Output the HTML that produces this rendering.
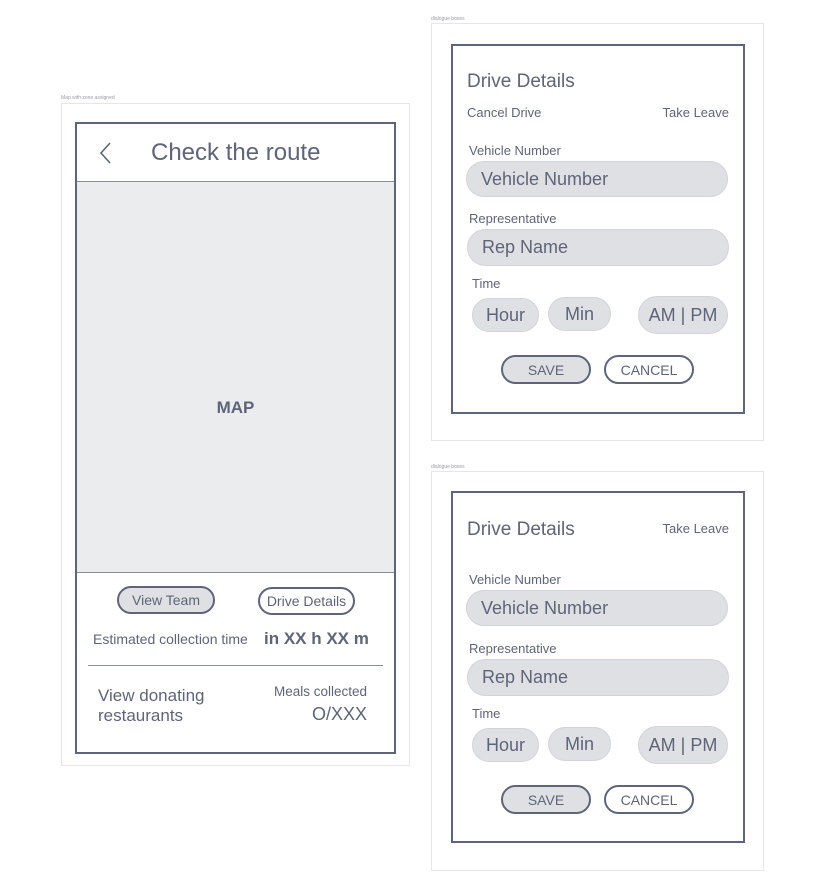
<!DOCTYPE html>
<html><head><meta charset="utf-8"><style>
*{margin:0;padding:0;box-sizing:border-box}
body{width:825px;height:892px;background:#fff;position:relative;overflow:hidden;font-family:"Liberation Sans",sans-serif;color:#5f6478}
div{position:absolute}
.card{border:1px solid #e6e6e8;background:#fff}
.frame{border:2px solid #5f6478;background:#fff}
.lbl{font-size:5px;color:#9a9ca4;white-space:nowrap}
.t{white-space:nowrap;line-height:1}
.pill{border-radius:20px;background:#dfe0e4;border:1.5px solid #d2d4d9;display:flex;align-items:center;justify-content:center;font-size:18px;color:#5f6478}
.in{justify-content:flex-start;padding-left:14px}
.btn{border-radius:16px;border:2px solid #5f6478;display:flex;align-items:center;justify-content:center;font-size:14px;color:#5f6478}
</style></head><body>

<!-- left -->
<div class="lbl" style="left:61px;top:95px">Map with zone assigned</div>
<div class="card" style="left:61px;top:103px;width:349px;height:663px"></div>
<div class="frame" style="left:75px;top:122px;width:321px;height:632px"></div>
<svg style="position:absolute;left:98px;top:141px" width="16" height="24"><path d="M12 2 L3 12 L12 22" fill="none" stroke="#5f6478" stroke-width="1.6"/></svg>
<div class="t" style="left:151px;top:141px;font-size:24px">Check the route</div>
<div style="left:77px;top:181px;width:317px;height:392px;background:#ebecee;border-top:1.5px solid #8a8e9c;border-bottom:1.5px solid #8a8e9c"></div>
<div class="t" style="left:77px;top:399px;width:317px;text-align:center;font-size:17px;font-weight:bold">MAP</div>
<div class="btn" style="left:117px;top:586px;width:98px;height:28px;background:#dfe0e4;font-size:14px">View Team</div>
<div class="btn" style="left:258px;top:587px;width:97px;height:28px;font-size:14px">Drive Details</div>
<div class="t" style="left:93px;top:632px;font-size:14px">Estimated collection time</div>
<div class="t" style="left:264px;top:630px;font-size:17px;font-weight:bold">in XX h XX m</div>
<div style="left:88px;top:665px;width:295px;height:1px;background:#8a8e9c"></div>
<div class="t" style="left:98px;top:686px;font-size:17px;line-height:20px">View donating<br>restaurants</div>
<div class="t" style="left:200px;top:685px;width:167px;text-align:right;font-size:13.5px">Meals collected</div>
<div class="t" style="left:200px;top:705px;width:167px;text-align:right;font-size:18px">O/XXX</div>

<!-- top right -->
<div class="lbl" style="left:431px;top:16px">dialogue boxes</div>
<div class="card" style="left:431px;top:23px;width:333px;height:418px"></div>
<div class="frame" style="left:451px;top:44px;width:294px;height:370px"></div>
<div class="t" style="left:467px;top:72px;font-size:19px">Drive Details</div>
<div class="t" style="left:467px;top:106px;font-size:13px">Cancel Drive</div>
<div class="t" style="left:600px;top:106px;width:129px;text-align:right;font-size:13px">Take Leave</div>
<div class="t" style="left:469px;top:144px;font-size:13px">Vehicle Number</div>
<div class="pill in" style="left:466px;top:161px;width:262px;height:36px">Vehicle Number</div>
<div class="t" style="left:469px;top:212px;font-size:13px">Representative</div>
<div class="pill in" style="left:467px;top:229px;width:262px;height:37px">Rep Name</div>
<div class="t" style="left:472px;top:277px;font-size:13px">Time</div>
<div class="pill" style="left:472px;top:298px;width:67px;height:34px">Hour</div>
<div class="pill" style="left:548px;top:297px;width:63px;height:34px">Min</div>
<div class="pill" style="left:638px;top:296px;width:90px;height:38px">AM | PM</div>
<div class="btn" style="left:501px;top:355px;width:90px;height:29px;background:#dfe0e4">SAVE</div>
<div class="btn" style="left:604px;top:355px;width:90px;height:29px">CANCEL</div>

<!-- bottom right -->
<div class="lbl" style="left:431px;top:464px">dialogue boxes</div>
<div class="card" style="left:431px;top:471px;width:333px;height:400px"></div>
<div class="frame" style="left:451px;top:491px;width:294px;height:352px"></div>
<div class="t" style="left:467px;top:520px;font-size:19px">Drive Details</div>
<div class="t" style="left:600px;top:522px;width:129px;text-align:right;font-size:13px">Take Leave</div>
<div class="t" style="left:469px;top:573px;font-size:13px">Vehicle Number</div>
<div class="pill in" style="left:466px;top:590px;width:262px;height:36px">Vehicle Number</div>
<div class="t" style="left:469px;top:642px;font-size:13px">Representative</div>
<div class="pill in" style="left:467px;top:659px;width:262px;height:37px">Rep Name</div>
<div class="t" style="left:472px;top:707px;font-size:13px">Time</div>
<div class="pill" style="left:472px;top:728px;width:67px;height:34px">Hour</div>
<div class="pill" style="left:548px;top:727px;width:63px;height:34px">Min</div>
<div class="pill" style="left:638px;top:726px;width:90px;height:38px">AM | PM</div>
<div class="btn" style="left:501px;top:785px;width:90px;height:29px;background:#dfe0e4">SAVE</div>
<div class="btn" style="left:604px;top:785px;width:90px;height:29px">CANCEL</div>
</body></html>
